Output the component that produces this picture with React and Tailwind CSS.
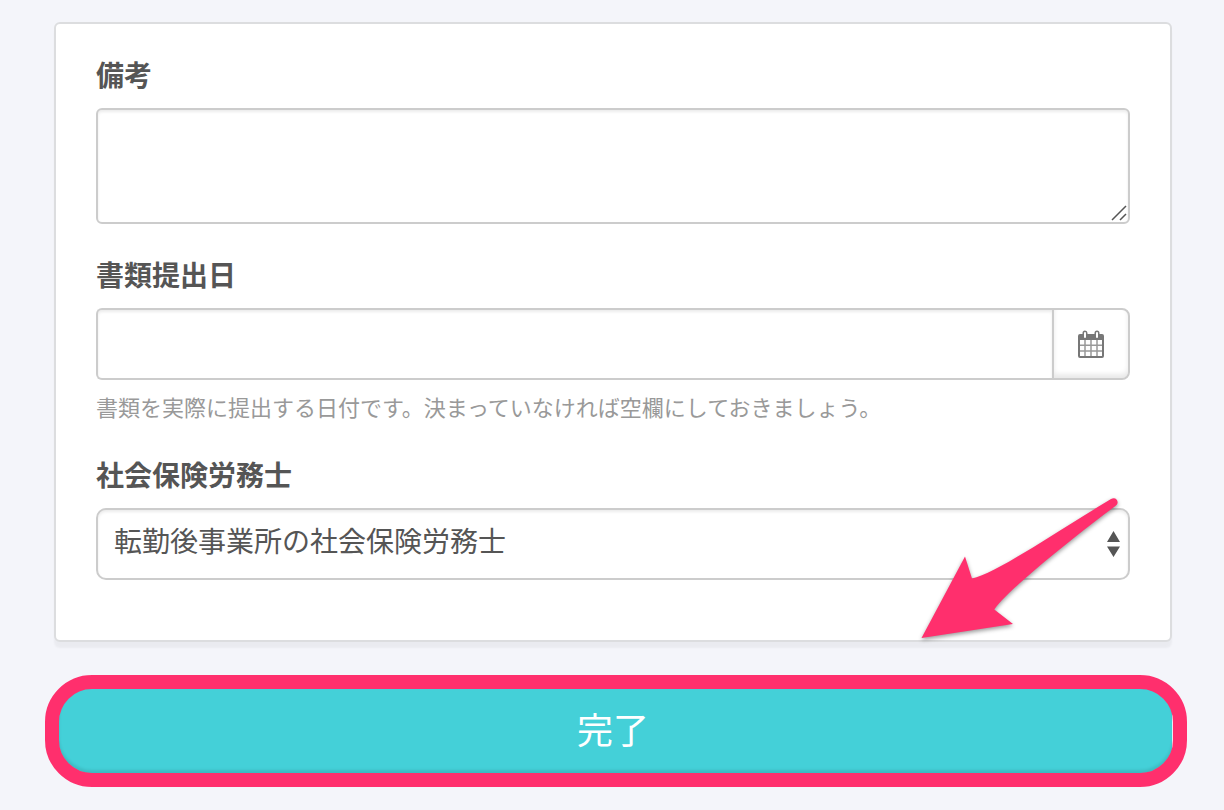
const label = "block text-[28px] leading-9 font-bold";
const control =
  "border-[#cccccc] bg-white shadow-[inset_0_2px_3px_rgba(0,0,0,0.08)] outline-none focus:border-[#44d0d8]";

function CalendarIcon() {
  return (
    <svg width="26" height="28" viewBox="0 0 26 28" aria-hidden="true">
      <path
        fill="#777777"
        fillRule="evenodd"
        d="M2 4H4.500V3a2.500 2.500 0 0 1 5 0V4h7V3a2.500 2.500 0 0 1 5 0V4H24a2 2 0 0 1 2 2V26a2 2 0 0 1-2 2H2a2 2 0 0 1-2-2V6a2 2 0 0 1 2-2ZM2 10V26H24V10Z"
      />
      <path stroke="#fff" strokeWidth="2" strokeLinecap="round" d="M7 3v4M19 3v4" />
      <path stroke="#999999" strokeWidth="1.500" d="M7 10v16M13 10v16M19 10v16M2 15.200h22M2 21h22" />
    </svg>
  );
}

function Arrow() {
  return (
    <svg
      className="pointer-events-none absolute right-12 -bottom-1 drop-shadow-[0_2px_2px_rgba(0,0,0,0.4)]"
      width="206"
      height="150"
      viewBox="916 494 206 150"
      aria-hidden="true"
    >
      <path
        fill="#ff2f6d"
        d="M921.500 638L965 556.500L972 578.500C997 573 1061 529 1111 499C1116 496 1120 502 1116 505.500C1080 532 1005 592 994.300 609.500L1013 624Z"
      />
    </svg>
  );
}

export default function App() {
  return (
    <main className="min-h-screen bg-[#f4f5fa] pt-[22px] pr-[52px] pb-6 pl-[54px] font-['Noto_Sans_CJK_JP',sans-serif] text-[#555555]">
      <form onSubmit={(e) => e.preventDefault()}>
        <section className="relative flex flex-col gap-8 rounded-md border-2 border-[#dcdddf] bg-white px-10 pt-8 pb-[60px] shadow-[0_6px_2px_rgba(0,0,0,0.04)]">
          <div>
            <label htmlFor="note" className={label}>備考</label>
            <div className="relative mt-4">
              <textarea id="note" className={`block h-[116px] w-full resize-none rounded-md border-2 px-4 py-3 text-[28px] leading-10 ${control}`} />
              <svg className="pointer-events-none absolute right-[3px] bottom-[3px] text-[#555555]" width="16" height="16" viewBox="0 0 16 16" aria-hidden="true">
                <path stroke="currentColor" strokeWidth="1.500" d="M1 15L15 1M9 15L15 9" />
              </svg>
            </div>
          </div>

          <div>
            <label htmlFor="date" className={label}>書類提出日</label>
            <div className="mt-4 flex h-[72px]">
              <input id="date" type="text" className={`min-w-0 flex-1 rounded-l-md border-y-2 border-l-2 px-4 text-[28px] ${control}`} />
              <button
                type="button"
                aria-label="カレンダーを開く"
                className="flex w-[78px] items-center justify-center rounded-r-lg border-2 border-[#cccccc] bg-white shadow-[inset_0_-4px_5px_rgba(0,0,0,0.09)]"
              >
                <CalendarIcon />
              </button>
            </div>
            <p className="mt-2 text-[22px] leading-9 text-[#999999]">
              書類を実際に提出する日付です。決まっていなければ空欄にしておきましょう。
            </p>
          </div>

          <div>
            <label htmlFor="agent" className={label}>社会保険労務士</label>
            <div className="relative mt-4">
              <select id="agent" className={`block h-[72px] w-full appearance-none rounded-[10px] border-2 px-4 pb-2 text-[28px] ${control}`}>
                <option>転勤後事業所の社会保険労務士</option>
              </select>
              <svg className="pointer-events-none absolute top-[23px] right-[10px]" width="13" height="26" viewBox="0 0 13 26" aria-hidden="true">
                <path fill="#555555" d="M6.500 0L13 11H0ZM6.500 26L13 15.500H0Z" />
              </svg>
            </div>
          </div>
          <Arrow />
        </section>

        <div className="relative mt-11">
          <button
            type="submit"
            className="block h-[90px] w-full rounded-3xl bg-[#44d0d8] pb-1.5 text-4xl text-white"
          >
            完了
          </button>
          <span
            aria-hidden="true"
            className="pointer-events-none absolute -top-[11px] -right-[15px] -bottom-[11px] -left-[9px] rounded-[47px] border-[14px] border-[#ff2f6d] shadow-[inset_0_-3px_3px_rgba(0,0,0,0.1)]"
          />
        </div>
      </form>
    </main>
  );
}
